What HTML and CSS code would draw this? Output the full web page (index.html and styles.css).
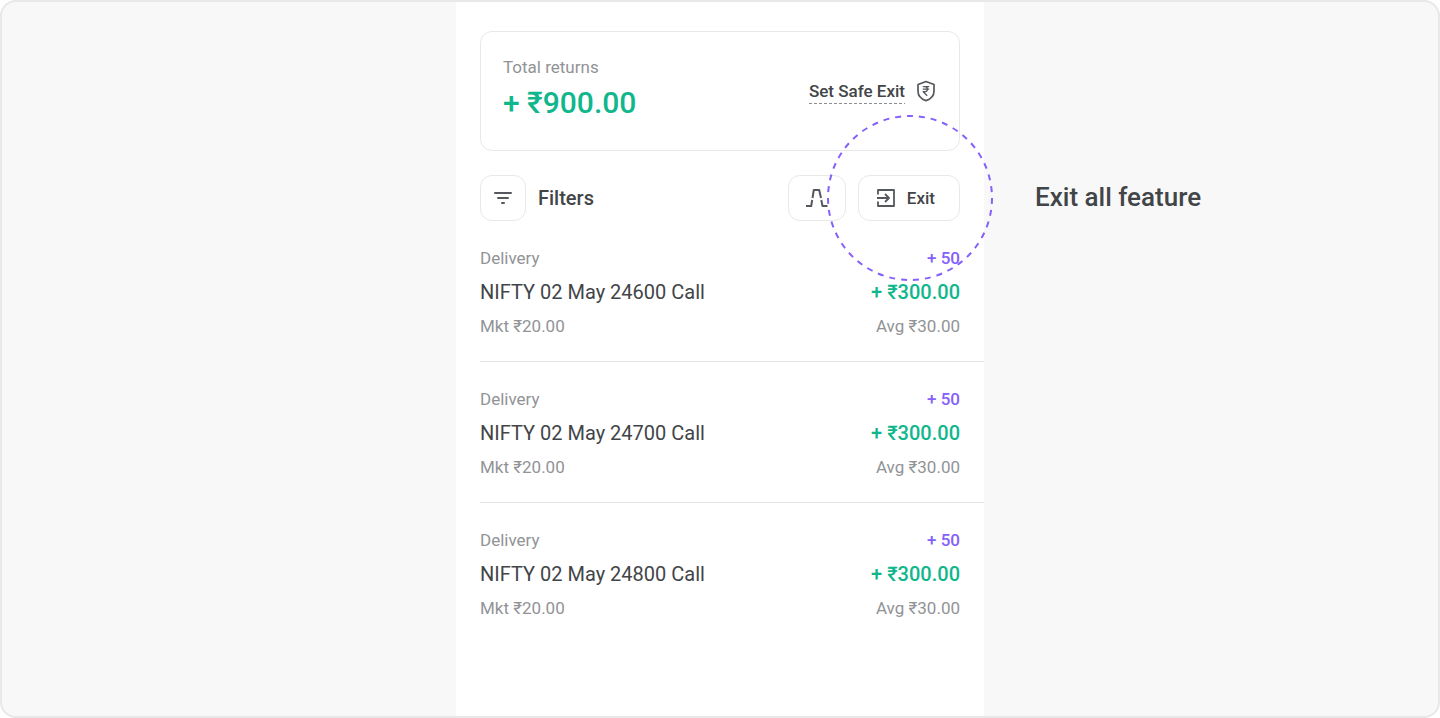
FILE: index.html
```html
<!DOCTYPE html>
<html lang="en">
<head>
<meta charset="utf-8">
<title>Exit all feature</title>
<link rel="stylesheet" href="styles.css">
</head>
<body>
<main class="stage">
  <section class="phone">
    <div class="summary">
      <div>
        <div class="muted">Total returns</div>
        <div class="total">+ ₹900.00</div>
      </div>
      <a class="safe-exit" href="#"><span class="safe-label">Set Safe Exit</span>
        <svg class="icon" width="18" height="22" viewBox="0 0 18 22" fill="none" stroke="currentColor" stroke-width="1.700" stroke-linejoin="round" aria-hidden="true"><path d="M9 1.500 17 4.500v6.500c0 4.600-3.400 8.200-8 9.600C4.400 19.200 1 15.600 1 11V4.500z"/><path stroke-width="1.300" d="M5.800 6.700h6.400M5.800 9.200h6.400M5.800 6.700h2c3.400 0 3.400 5 0 5H6.200l4 4"/></svg>
      </a>
    </div>
    <div class="toolbar">
      <button class="btn btn-filter" id="filter" type="button" aria-labelledby="filter-label">
        <svg class="icon" width="18" height="12" viewBox="0 0 18 12" fill="none" stroke="currentColor" stroke-width="2" stroke-linecap="round" aria-hidden="true"><path d="M1 1h16M4 6h10M8 11h2"/></svg>
      </button>
      <label class="filter-label" id="filter-label" for="filter">Filters</label>
      <button class="btn btn-payoff" type="button" aria-label="Payoff graph">
        <svg class="icon" width="22" height="18" viewBox="0 0 22 18" fill="none" stroke="currentColor" stroke-width="2" stroke-linejoin="round" aria-hidden="true"><path d="M0 17h5.200l1-6M6.500 9 7.800 1h5.400l1.800 8M15.300 11l1.200 6H21.500"/></svg>
      </button>
      <div class="exit-wrap">
        <button class="btn btn-exit" type="button">
          <svg class="icon" width="18" height="18" viewBox="0 0 18 18" fill="none" stroke="currentColor" stroke-width="1.800" stroke-linejoin="round" aria-hidden="true"><path d="M1 5.500V1h16v16H1v-4.500M0 9h11.500M8 5l4 4-4 4"/></svg>
          Exit
        </button>
        <svg class="ring" viewBox="0 0 166 166" aria-hidden="true"><circle cx="83" cy="83" r="82" pathLength="258"/></svg>
      </div>
    </div>
    <ul class="positions">
      <li class="position">
        <span class="muted">Delivery</span><span class="qty">+ 50</span>
        <span class="name">NIFTY 02 May 24600 Call</span><span class="gain">+ ₹300.00</span>
        <span class="muted">Mkt ₹20.00</span><span class="muted">Avg ₹30.00</span>
      </li>
      <li class="position">
        <span class="muted">Delivery</span><span class="qty">+ 50</span>
        <span class="name">NIFTY 02 May 24700 Call</span><span class="gain">+ ₹300.00</span>
        <span class="muted">Mkt ₹20.00</span><span class="muted">Avg ₹30.00</span>
      </li>
      <li class="position">
        <span class="muted">Delivery</span><span class="qty">+ 50</span>
        <span class="name">NIFTY 02 May 24800 Call</span><span class="gain">+ ₹300.00</span>
        <span class="muted">Mkt ₹20.00</span><span class="muted">Avg ₹30.00</span>
      </li>
    </ul>
  </section>
  <h1 class="note">Exit all feature</h1>
</main>
</body>
</html>
```
FILE: styles.css
```css
* { box-sizing: border-box; }
body {
  margin: 0;
  background: #fff;
  color: #424548;
  font-family: Roboto, "Liberation Sans", sans-serif;
}
.stage {
  display: grid;
  grid-template-columns: 1fr minmax(0, 528px) 1fr;
  min-height: 100vh;
  border: 2px solid #e8e8e8;
  border-radius: 16px;
  background: #f8f8f8;
}
.phone {
  grid-column: 2;
  padding: 29px 0 24px 24px;
  background: #fff;
}
.icon { color: #55585c; }
.summary {
  display: flex;
  align-items: center;
  justify-content: space-between;
  margin-right: 24px;
  padding: 23px 24px 23px 22px;
  border: 1px solid #e8e8e8;
  border-radius: 12px;
}
.muted {
  color: #919396;
  font-size: 17px;
  line-height: 24px;
}
.total {
  color: #10b68c;
  font-size: 30px;
  font-weight: 500;
  line-height: 48px;
}
.safe-exit {
  display: flex;
  align-items: center;
  gap: 12px;
  color: inherit;
  font-size: 17px;
  font-weight: 500;
  line-height: 24px;
  text-decoration: none;
}
.safe-label {
  padding-bottom: 1px;
  background: repeating-linear-gradient(90deg, #8c8e91 0 3px, transparent 3px 5px) bottom / 100% 1px no-repeat;
}
.toolbar {
  display: flex;
  align-items: center;
  margin: 24px 24px 0 0;
}
.btn {
  display: flex;
  align-items: center;
  justify-content: center;
  height: 46px;
  padding: 0;
  border: 1px solid #e8e8e8;
  border-radius: 12px;
  background: #fff;
  color: inherit;
  font: 500 17px/24px Roboto, "Liberation Sans", sans-serif;
}
.btn-filter { width: 46px; }
.btn-payoff { width: 58px; margin-left: auto; }
.btn-exit {
  gap: 12px;
  padding: 0 24px 0 18px;
}
.filter-label {
  margin-left: 12px;
  font-size: 20px;
  font-weight: 500;
}
.exit-wrap {
  position: relative;
  margin-left: 12px;
}
.ring {
  position: absolute;
  top: 50%;
  left: 50%;
  width: 166px;
  height: 166px;
  margin: -83px -82px;
  fill: none;
  stroke: #8560fa;
  stroke-width: 2;
  stroke-dasharray: 3;
  pointer-events: none;
}
.positions {
  margin: 0;
  padding: 0;
  list-style: none;
}
.position {
  display: grid;
  grid-template-columns: 1fr auto;
  row-gap: 8px;
  padding: 25px 24px 23px 0;
}
.position + .position { border-top: 1px solid #e4e4e4; }
.position > :nth-child(even) { text-align: right; }
.qty {
  color: #8560fa;
  font-size: 17px;
  font-weight: 500;
  line-height: 24px;
}
.name, .gain {
  font-size: 20px;
  line-height: 28px;
}
.gain {
  color: #10b68c;
  font-weight: 500;
}
.note {
  margin: 177px 0 0 51px;
  font-size: 26px;
  font-weight: 500;
  line-height: 36px;
}
```
